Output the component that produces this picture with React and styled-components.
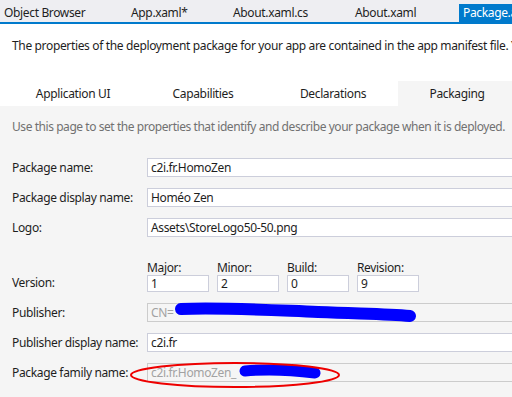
import styled, { createGlobalStyle } from "styled-components";

const Global = createGlobalStyle`
  html, body { margin: 0; padding: 0; }
  body {
    width: 512px;
    height: 397px;
    overflow: hidden;
    background: #f5f5f5;
    font-family: "Segoe UI", "Noto Sans", "Open Sans", sans-serif;
    font-size: 12px;
    letter-spacing: -0.35px;
    color: #1e1e1e;
  }
`;

const Page = styled.div`
  width: 512px;
  height: 397px;
  overflow: hidden;
  display: flex;
  flex-direction: column;
  background: #f5f5f5;
`;

const DocTabs = styled.div`
  display: flex;
  align-items: flex-end;
  height: 22px;
  background: #eeeef2;
  border-bottom: 2px solid #007acc;
  white-space: nowrap;
`;

const DocTab = styled.div`
  width: ${(p) => p.$w}px;
  flex: none;
  height: 18px;
  line-height: 18px;
  padding-left: 4px;
  box-sizing: border-box;
  background: ${(p) => (p.$active ? "#007acc" : "transparent")};
  color: ${(p) => (p.$active ? "#ffffff" : "#1e1e1e")};
  overflow: hidden;
`;

const Intro = styled.div`
  background: #ffffff;
  padding: 13px 0 0 12px;
  height: 44px;
  white-space: nowrap;
  overflow: hidden;
`;

const PageTabs = styled.div`
  display: flex;
  background: #ffffff;
  padding-left: 8px;
  height: 25px;
  white-space: nowrap;
`;

const PageTab = styled.div`
  flex: none;
  width: ${(p) => p.$w}px;
  text-align: center;
  line-height: 25px;
  background: ${(p) => (p.$active ? "#f5f5f5" : "#ffffff")};
`;

const Panel = styled.div`
  flex: 1;
  background: #f5f5f5;
  padding: 12px 0 0 12px;
`;

const Hint = styled.div`
  color: #717171;
  white-space: nowrap;
  letter-spacing: -0.44px;
  margin-bottom: 23px;
`;

const Form = styled.div`
  display: grid;
  grid-template-columns: 135px 380px;
  row-gap: 11px;
  align-items: center;
`;

const Label = styled.div`
  white-space: nowrap;
  align-self: ${(p) => (p.$bottom ? "end" : "center")};
  padding-bottom: ${(p) => (p.$bottom ? "1px" : "0")};
`;

const Field = styled.div`
  position: relative;
  height: 19px;
  box-sizing: border-box;
  border: 1px solid ${(p) => (p.$disabled ? "#cccccc" : "#cccedb")};
  background: ${(p) => (p.$disabled ? "#f5f5f5" : "#ffffff")};
  color: ${(p) => (p.$disabled ? "#a2a2a2" : "#1e1e1e")};
  padding-left: 3px;
  line-height: 17px;
  white-space: nowrap;
`;

const VersionGrid = styled.div`
  display: grid;
  grid-template-columns: repeat(4, 62px);
  column-gap: 8px;
  margin-top: 12px;
`;

const VersionPart = styled.div`
  display: flex;
  flex-direction: column;
`;

const VersionLabel = styled.div`
  height: 15px;
  line-height: 15px;
`;

const VersionBox = styled.div`
  height: 17px;
  box-sizing: border-box;
  border: 1px solid #cccedb;
  background: #ffffff;
  padding-left: 3px;
  line-height: 15px;
`;

const Scribble = styled.svg`
  position: absolute;
  left: ${(p) => p.$x}px;
  top: ${(p) => p.$y}px;
  overflow: visible;
  pointer-events: none;
`;

const Ellipse = styled.svg`
  position: absolute;
  left: -18px;
  top: -2px;
  overflow: visible;
  pointer-events: none;
`;

const docTabs = [
  { t: "Object Browser", w: 127 },
  { t: "App.xaml*", w: 102 },
  { t: "About.xaml.cs", w: 122 },
  { t: "About.xaml", w: 108 },
  { t: "Package.appxmanifest", w: 60, active: true },
];

const pageTabs = [
  { t: "Application UI", w: 130 },
  { t: "Capabilities", w: 130 },
  { t: "Declarations", w: 130 },
  { t: "Packaging", w: 118, active: true },
];

const version = [
  ["Major:", "1"],
  ["Minor:", "2"],
  ["Build:", "0"],
  ["Revision:", "9"],
];

export default function App() {
  return (
    <Page>
      <Global />
      <DocTabs>
        {docTabs.map((d) => (
          <DocTab key={d.t} $w={d.w} $active={d.active}>
            {d.t}
          </DocTab>
        ))}
      </DocTabs>
      <Intro>
        The properties of the deployment package for your app are contained in the app manifest file. You can use the Manifest Designer to set or modify one or more of the properties.
      </Intro>
      <PageTabs>
        {pageTabs.map((d) => (
          <PageTab key={d.t} $w={d.w} $active={d.active}>
            {d.t}
          </PageTab>
        ))}
      </PageTabs>
      <Panel>
        <Hint>Use this page to set the properties that identify and describe your package when it is deployed.</Hint>
        <Form>
          <Label>Package name:</Label>
          <Field>c2i.fr.HomoZen</Field>

          <Label>Package display name:</Label>
          <Field>Homéo Zen</Field>

          <Label>Logo:</Label>
          <Field>Assets\StoreLogo50-50.png</Field>

          <Label $bottom>Version:</Label>
          <VersionGrid>
            {version.map(([l, v]) => (
              <VersionPart key={l}>
                <VersionLabel>{l}</VersionLabel>
                <VersionBox>{v}</VersionBox>
              </VersionPart>
            ))}
          </VersionGrid>

          <Label>Publisher:</Label>
          <Field $disabled>
            CN=
            <Scribble $x={30} $y={0} width="236" height="18">
              <path
                d="M3 5 C 40 3, 90 6, 140 8 S 210 10, 232 12"
                stroke="#0000ff"
                strokeWidth="12"
                strokeLinecap="round"
                fill="none"
              />
            </Scribble>
          </Field>

          <Label>Publisher display name:</Label>
          <Field>c2i.fr</Field>

          <Label>Package family name:</Label>
          <Field $disabled>
            c2i.fr.HomoZen_
            <Scribble $x={93} $y={0} width="80" height="18">
              <path
                d="M4 7 C 25 5, 50 6, 74 9"
                stroke="#0000ff"
                strokeWidth="11"
                strokeLinecap="round"
                fill="none"
              />
            </Scribble>
            <Ellipse width="212" height="26">
              <ellipse cx="105" cy="13" rx="104" ry="12" stroke="#ee0000" strokeWidth="2" fill="none" />
            </Ellipse>
          </Field>
        </Form>
      </Panel>
    </Page>
  );
}
